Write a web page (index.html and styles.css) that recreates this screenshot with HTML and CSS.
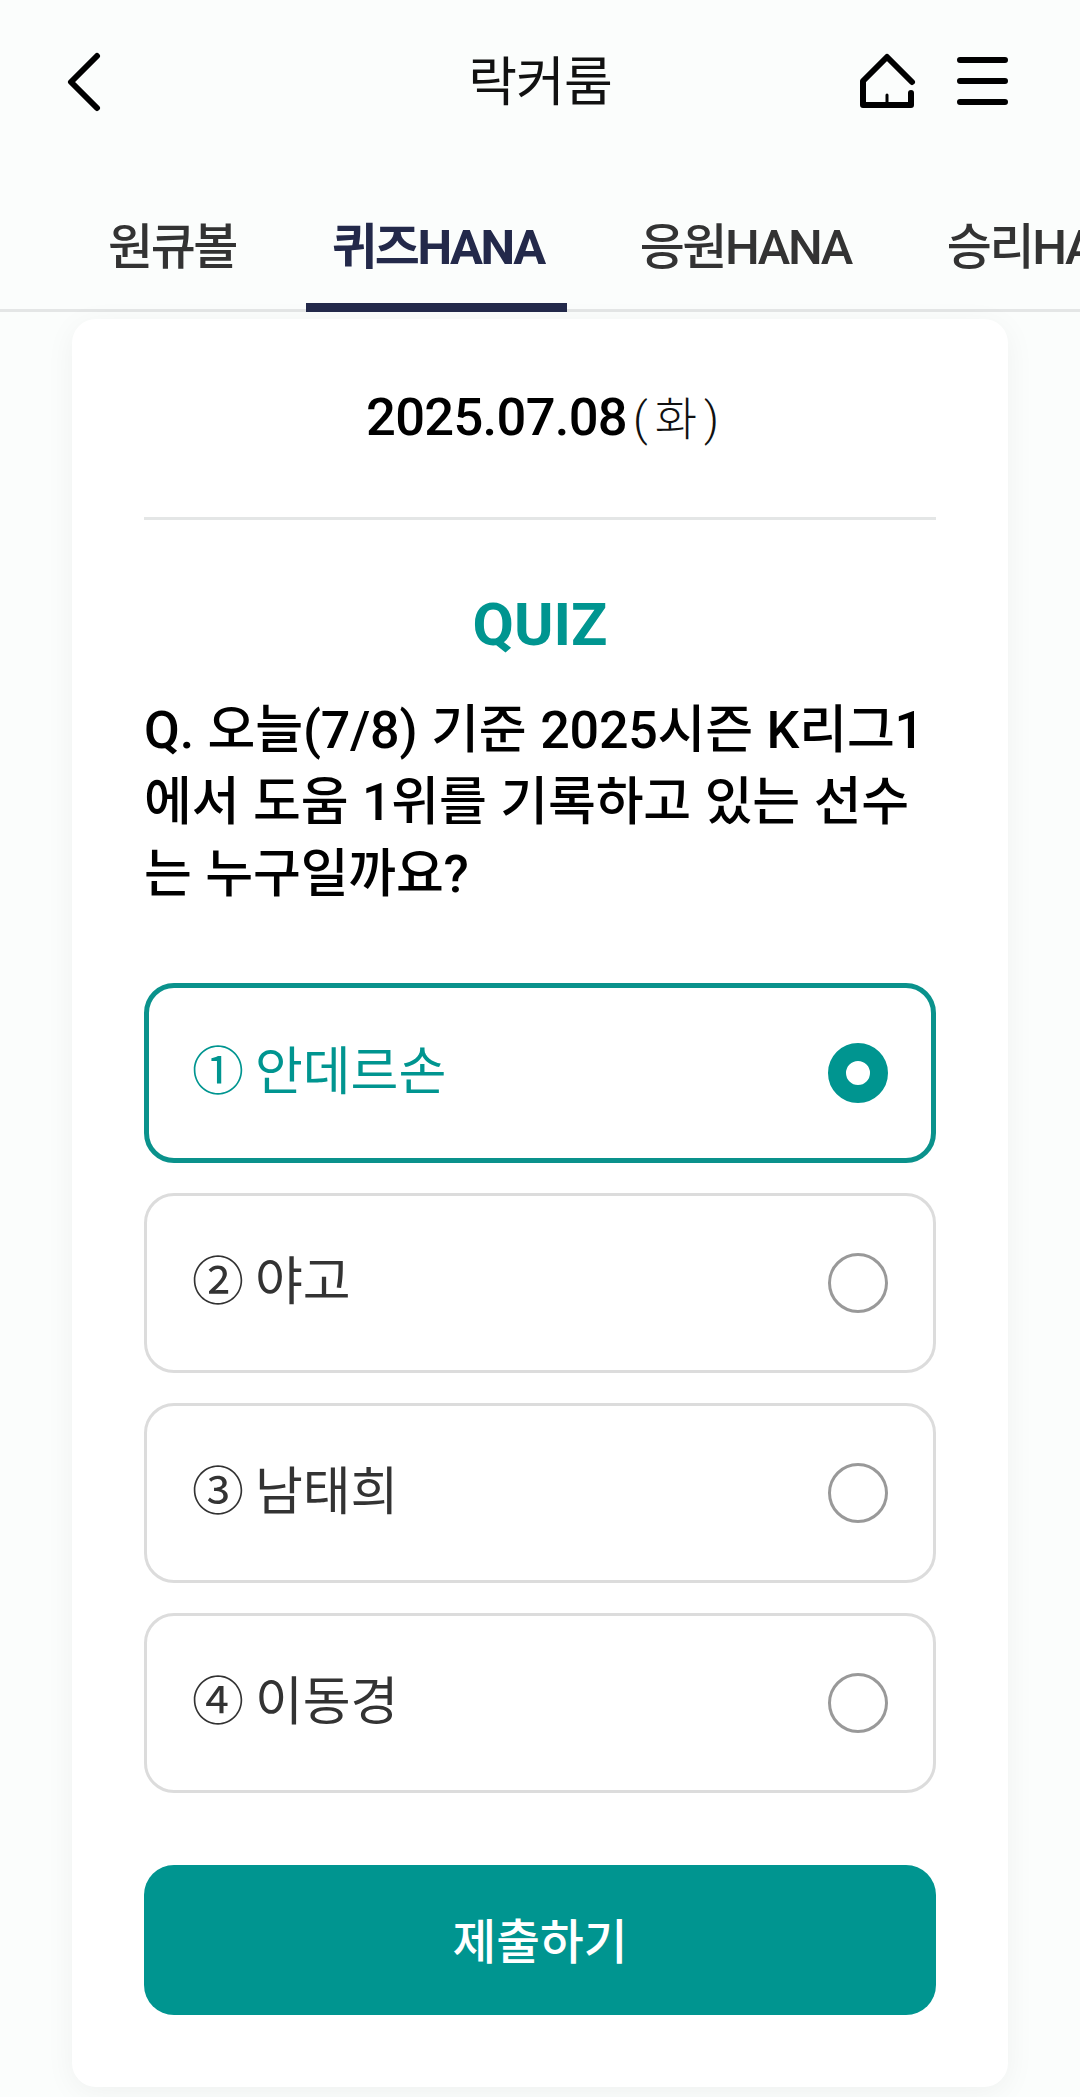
FILE: index.html
```html
<!DOCTYPE html>
<html lang="ko">
<head>
    <meta charset="UTF-8">
    <title>락커룸</title>
    <link rel="stylesheet" href="styles.css">
</head>
<body>
    <div class="page">
        <header class="top">
            <svg class="back" width="40" height="60" viewBox="0 0 40 60">
                <path d="M33 4 L7 30 L33 56" fill="none" stroke="#000" stroke-width="6" stroke-linecap="round" stroke-linejoin="round"/>
            </svg>
            <h1 class="title">락커룸</h1>
            <div class="top-icons">
                <svg width="60" height="58" viewBox="0 0 60 58">
                    <path d="M55 31 L30 6 L6 30 V54 H54 V42" fill="none" stroke="#000" stroke-width="6" stroke-linecap="round" stroke-linejoin="round"/>
                    <path d="M30 44 V54" fill="none" stroke="#000" stroke-width="3" stroke-linecap="round"/>
                </svg>
                <svg width="52" height="58" viewBox="0 0 52 58">
                    <path d="M4 9 H49 M4 30 H49 M4 51 H49" fill="none" stroke="#000" stroke-width="6" stroke-linecap="round"/>
                </svg>
            </div>
        </header>

        <nav class="tabs">
            <a class="tab">원큐볼</a>
            <a class="tab current">퀴즈HANA</a>
            <a class="tab">응원HANA</a>
            <a class="tab">승리HANA</a>
        </nav>

        <main class="card">
            <div class="date"><b>2025.07.08</b><span>(화)</span></div>
            <h2 class="quiz">QUIZ</h2>
            <p class="question">Q. 오늘(7/8) 기준 2025시즌 K리그1<br>에서 도움 1위를 기록하고 있는 선수<br>는 누구일까요?</p>

            <ul class="options">
                <li class="option on"><span>① 안데르손</span><i class="radio"></i></li>
                <li class="option"><span>② 야고</span><i class="radio"></i></li>
                <li class="option"><span>③ 남태희</span><i class="radio"></i></li>
                <li class="option"><span>④ 이동경</span><i class="radio"></i></li>
            </ul>

            <button class="submit">제출하기</button>
        </main>
    </div>
</body>
</html>
```

FILE: styles.css
```css
* {
    padding: 0;
    margin: 0;
    list-style: none;
    box-sizing: border-box;
}
html, body {
    width: 1080px;
    height: 2097px;
    overflow: hidden;
}
body {
    background-color: #fbfdfc;
    font-family: Roboto, "Noto Sans CJK KR", sans-serif;
}
.page {
    display: flex;
    flex-direction: column;
    height: 2097px;
}
.top {
    height: 165px;
    padding: 52px 72px 0 64px;
    display: flex;
    justify-content: space-between;
    align-items: flex-start;
    position: relative;
}
.title {
    position: absolute;
    left: 0;
    right: 0;
    top: 53px;
    text-align: center;
    font-size: 53px;
    line-height: 60px;
    font-weight: 400;
    letter-spacing: -1px;
    color: #111;
}
.top-icons {
    display: flex;
    gap: 39px;
    align-items: flex-start;
    margin-top: -1px;
}
.tabs {
    flex: none;
    height: 147px;
    box-shadow: inset 0 -3px 0 #e4e6e6;
    display: flex;
    padding-left: 108px;
    white-space: nowrap;
    overflow: hidden;
}
.tab {
    font-size: 49px;
    font-weight: 500;
    letter-spacing: -2.4px;
    color: #333;
    line-height: 60px;
    padding-top: 53px;
    margin-right: 96px;
    flex: none;
    position: relative;
}
.tab.current {
    color: #23294a;
    font-weight: 700;
}
.tab.current:after {
    content: "";
    position: absolute;
    left: -26px;
    right: -23px;
    bottom: 0;
    height: 9px;
    background-color: #23294a;
}
.card {
    flex: none;
    width: 936px;
    height: 1768px;
    margin: 7px 0 0 72px;
    padding: 0 72px;
    background-color: #fff;
    border-radius: 24px;
    box-shadow: 0 6px 30px rgba(0, 0, 0, 0.05);
}
.date {
    height: 201px;
    padding-top: 66px;
    border-bottom: 3px solid #e4e6e6;
    text-align: center;
    font-size: 48px;
    line-height: 64px;
    color: #000;
}
.date b {
    font-weight: 500;
    font-size: 52.5px;
    letter-spacing: -0.7px;
}
.date span {
    margin: 0 -12px 0 6px;
    font-size: 46px;
    font-weight: 300;
    letter-spacing: 7px;
    color: #111;
}
.quiz {
    margin-top: 70px;
    text-align: center;
    font-size: 60px;
    line-height: 70px;
    font-weight: 700;
    color: #009590;
}
.question {
    margin-top: 35px;
    font-size: 52px;
    line-height: 72px;
    font-weight: 500;
    letter-spacing: -0.2px;
    word-spacing: 1px;
    color: #000;
}
.options {
    margin-top: 72px;
    display: flex;
    flex-direction: column;
    gap: 30px;
}
.option {
    height: 180px;
    padding: 0 45px;
    border: 3px solid #dcdcdc;
    border-radius: 30px;
    display: flex;
    justify-content: space-between;
    align-items: center;
    font-size: 52px;
    word-spacing: -2px;
    color: #333;
}
.option span {
    margin-top: -11px;
}
.option.on {
    padding: 0 43px;
    border: 5px solid #0a928c;
    color: #009590;
}
.radio {
    width: 60px;
    height: 60px;
    border: 3px solid #999;
    border-radius: 50%;
    background-color: #fff;
}
.on .radio {
    border: 18px solid #009590;
}
.submit {
    display: block;
    width: 100%;
    height: 150px;
    margin-top: 72px;
    padding-bottom: 3px;
    border: 0;
    border-radius: 30px;
    background-color: #009590;
    color: #fff;
    font-family: inherit;
    font-size: 47.5px;
    font-weight: 500;
}
```
